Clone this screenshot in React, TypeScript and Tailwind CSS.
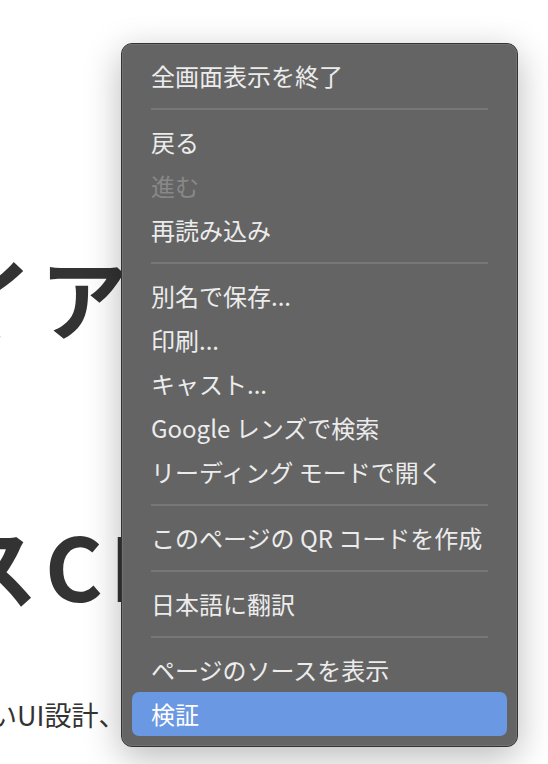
import React from "react";

type Item = { label: string; disabled?: boolean; active?: boolean } | "sep";

const items: Item[] = [
  { label: "全画面表示を終了" },
  "sep",
  { label: "戻る" },
  { label: "進む", disabled: true },
  { label: "再読み込み" },
  "sep",
  { label: "別名で保存..." },
  { label: "印刷..." },
  { label: "キャスト..." },
  { label: "Google レンズで検索" },
  { label: "リーディング モードで開く" },
  "sep",
  { label: "このページの QR コードを作成" },
  "sep",
  { label: "日本語に翻訳" },
  "sep",
  { label: "ページのソースを表示" },
  { label: "検証", active: true },
];

const font = { fontFamily: '"Noto Sans CJK JP", "Noto Sans", sans-serif' };

export default function App() {
  return (
    <div
      className="relative h-[764px] w-[548px] overflow-hidden bg-white text-[#333333]"
      style={font}
    >
      <div className="flex flex-col pt-[251px]">
        <p className="-ml-[150px] whitespace-nowrap text-[88px] font-bold leading-none tracking-[7px]">
          レイアウト設計
        </p>
        <p className="-ml-[335px] mt-[181px] whitespace-nowrap text-[88px] font-bold leading-none tracking-[7px]">
          プロセスCI/CD
        </p>
        <p className="-ml-[118px] mt-[93px] whitespace-nowrap text-[27px] leading-none">
          使いやすいUI設計、
        </p>
      </div>

      <div className="absolute left-[121px] top-[43px] w-[397px] rounded-[11px] border border-[#333333] bg-[#646464] shadow-[0_10px_36px_rgba(0,0,0,0.28)]">
        <div className="flex flex-col rounded-[10px] border border-[#727272] py-[9px]">
          {items.map((it, i) =>
            it === "sep" ? (
              <div key={i} className="flex h-[22px] items-center px-[28px]">
                <div className="h-[2px] w-full bg-[#777777]" />
              </div>
            ) : (
              <div
                key={i}
                className={
                  "mx-[9px] flex h-[44px] items-center rounded-[7px] px-[19px] text-[24px] leading-none " +
                  (it.active
                    ? "bg-[#6a98e2] text-white"
                    : it.disabled
                    ? "text-[#888888]"
                    : "text-[#ececec]")
                }
              >
                {it.label}
              </div>
            )
          )}
        </div>
      </div>
    </div>
  );
}
